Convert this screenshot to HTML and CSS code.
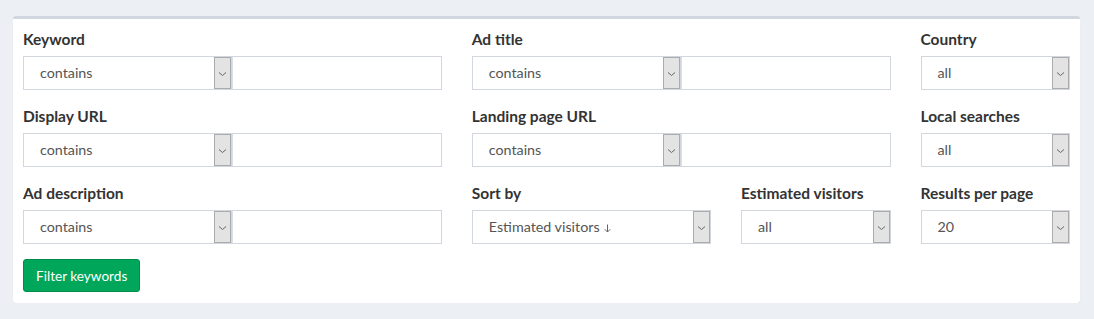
FILE: index.html
```html
<!DOCTYPE html>
<html lang="en">
<head>
    <meta charset="UTF-8">
    <meta name="viewport" content="width=device-width, initial-scale=1.0">
    <title>Keyword filter</title>
    <link rel="stylesheet" href="styles.css">
</head>
<body>
    <div class="box">
        <form class="filter-form">
            <!-- Row 1 -->
            <div class="form-group span-5">
                <label>Keyword</label>
                <div class="input-group">
                    <div class="select">
                        <span class="value">contains</span>
                        <span class="caret"><svg width="9" height="6" viewBox="0 0 9 6"><path d="M1 1.5 L4.5 4.5 L8 1.5" fill="none" stroke="#666" stroke-width="1"/></svg></span>
                    </div>
                    <input type="text" class="text-input">
                </div>
            </div>
            <div class="form-group span-5">
                <label>Ad title</label>
                <div class="input-group">
                    <div class="select">
                        <span class="value">contains</span>
                        <span class="caret"><svg width="9" height="6" viewBox="0 0 9 6"><path d="M1 1.5 L4.5 4.5 L8 1.5" fill="none" stroke="#666" stroke-width="1"/></svg></span>
                    </div>
                    <input type="text" class="text-input">
                </div>
            </div>
            <div class="form-group span-2">
                <label>Country</label>
                <div class="select">
                    <span class="value">all</span>
                    <span class="caret"><svg width="9" height="6" viewBox="0 0 9 6"><path d="M1 1.5 L4.5 4.5 L8 1.5" fill="none" stroke="#666" stroke-width="1"/></svg></span>
                </div>
            </div>

            <!-- Row 2 -->
            <div class="form-group span-5">
                <label>Display URL</label>
                <div class="input-group">
                    <div class="select">
                        <span class="value">contains</span>
                        <span class="caret"><svg width="9" height="6" viewBox="0 0 9 6"><path d="M1 1.5 L4.5 4.5 L8 1.5" fill="none" stroke="#666" stroke-width="1"/></svg></span>
                    </div>
                    <input type="text" class="text-input">
                </div>
            </div>
            <div class="form-group span-5">
                <label>Landing page URL</label>
                <div class="input-group">
                    <div class="select">
                        <span class="value">contains</span>
                        <span class="caret"><svg width="9" height="6" viewBox="0 0 9 6"><path d="M1 1.5 L4.5 4.5 L8 1.5" fill="none" stroke="#666" stroke-width="1"/></svg></span>
                    </div>
                    <input type="text" class="text-input">
                </div>
            </div>
            <div class="form-group span-2">
                <label>Local searches</label>
                <div class="select">
                    <span class="value">all</span>
                    <span class="caret"><svg width="9" height="6" viewBox="0 0 9 6"><path d="M1 1.5 L4.5 4.5 L8 1.5" fill="none" stroke="#666" stroke-width="1"/></svg></span>
                </div>
            </div>

            <!-- Row 3 -->
            <div class="form-group span-5">
                <label>Ad description</label>
                <div class="input-group">
                    <div class="select">
                        <span class="value">contains</span>
                        <span class="caret"><svg width="9" height="6" viewBox="0 0 9 6"><path d="M1 1.5 L4.5 4.5 L8 1.5" fill="none" stroke="#666" stroke-width="1"/></svg></span>
                    </div>
                    <input type="text" class="text-input">
                </div>
            </div>
            <div class="form-group span-3">
                <label>Sort by</label>
                <div class="select">
                    <span class="value">Estimated visitors <svg class="sort-arrow" width="7" height="9" viewBox="0 0 7 9"><path d="M3.5 0.5 V8 M0.8 5.3 L3.5 8 L6.2 5.3" fill="none" stroke="#666" stroke-width="1"/></svg></span>
                    <span class="caret"><svg width="9" height="6" viewBox="0 0 9 6"><path d="M1 1.5 L4.5 4.5 L8 1.5" fill="none" stroke="#666" stroke-width="1"/></svg></span>
                </div>
            </div>
            <div class="form-group span-2">
                <label>Estimated visitors</label>
                <div class="select">
                    <span class="value">all</span>
                    <span class="caret"><svg width="9" height="6" viewBox="0 0 9 6"><path d="M1 1.5 L4.5 4.5 L8 1.5" fill="none" stroke="#666" stroke-width="1"/></svg></span>
                </div>
            </div>
            <div class="form-group span-2">
                <label>Results per page</label>
                <div class="select">
                    <span class="value">20</span>
                    <span class="caret"><svg width="9" height="6" viewBox="0 0 9 6"><path d="M1 1.5 L4.5 4.5 L8 1.5" fill="none" stroke="#666" stroke-width="1"/></svg></span>
                </div>
            </div>

            <div class="actions">
                <button type="button" class="btn-success">Filter keywords</button>
            </div>
        </form>
    </div>
</body>
</html>
```

FILE: styles.css
```css
body {
    margin: 0;
    padding: 16px 14px 0 13px;
    background-color: #ecf0f5;
    font-family: 'Lato', 'Liberation Sans', sans-serif;
    color: #333;
}

.box {
    background: #fff;
    border-top: 3px solid #d2d6de;
    border-radius: 3px;
    box-shadow: 0 1px 1px rgba(0, 0, 0, 0.1);
    padding: 10px 10px 11px 10px;
}

.filter-form {
    display: grid;
    grid-template-columns: repeat(12, 1fr);
    column-gap: 30px;
}

.span-5 { grid-column: span 5; }
.span-3 { grid-column: span 3; }
.span-2 { grid-column: span 2; }

.form-group {
    margin-bottom: 16px;
    min-width: 0;
}

label {
    display: block;
    font-size: 15.5px;
    font-weight: 700;
    line-height: 20px;
    margin-bottom: 7px;
    color: #333;
}

.input-group {
    display: grid;
    grid-template-columns: 1fr 1fr;
}

.select {
    display: flex;
    height: 34px;
    box-sizing: border-box;
    border: 1px solid #d2d6de;
    background: #fff;
    cursor: default;
    min-width: 0;
}

.select .value {
    flex: 1;
    min-width: 0;
    padding-left: 16px;
    font-size: 14.3px;
    line-height: 32px;
    color: #555;
    white-space: nowrap;
    overflow: hidden;
}

.sort-arrow {
    vertical-align: -1px;
    margin-left: 1px;
}

.caret {
    width: 15px;
    background: #e3e3e3;
    border: 1px solid #ababab;
    display: flex;
    align-items: center;
    justify-content: center;
}

.caret svg {
    margin-top: 1px;
}

.text-input {
    min-width: 0;
    width: auto;
    height: 34px;
    box-sizing: border-box;
    border: 1px solid #d2d6de;
    border-left-color: #d8dfea;
    margin: 0;
    font-family: inherit;
    font-size: 14px;
    padding: 0 12px;
    outline: none;
}

.actions {
    grid-column: span 12;
    margin-top: -1px;
}

.btn-success {
    background-color: #00a65a;
    border: 1px solid #008d4c;
    border-radius: 3px;
    color: #fff;
    font-family: inherit;
    font-size: 13.6px;
    height: 33px;
    padding: 0 12px;
    cursor: pointer;
}
```
